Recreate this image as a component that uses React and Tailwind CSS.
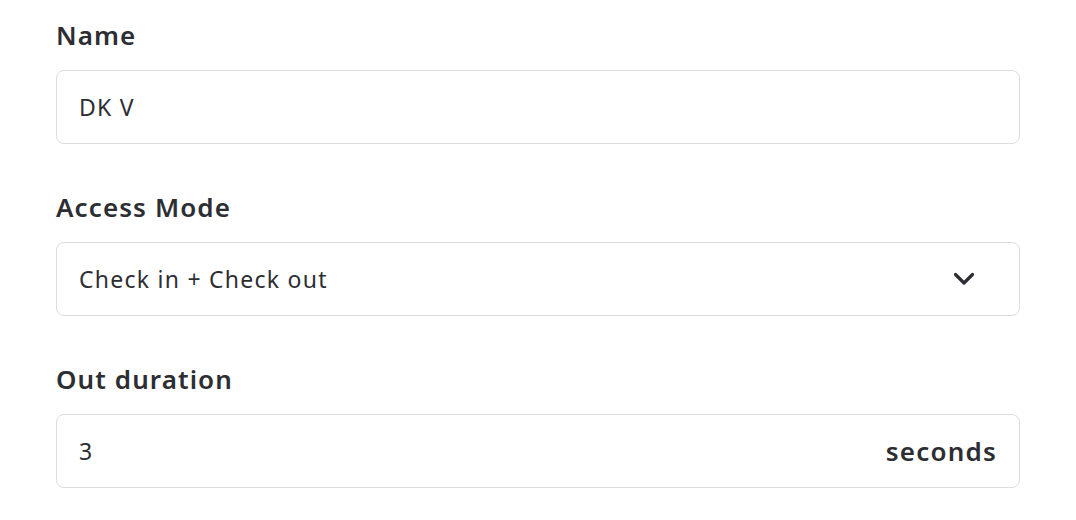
import React from "react";

const font = { fontFamily: "'Noto Sans', 'Open Sans', sans-serif" };

function Label({ children }) {
  return (
    <div className="h-[34px] flex items-center text-[26px] font-semibold tracking-[1.1px] text-[#2c2e33] leading-none">
      {children}
    </div>
  );
}

export default function App() {
  return (
    <div className="w-[1076px] h-[520px] bg-white pl-[56px] pr-[56px] pt-[18px]" style={font}>
      <div className="flex flex-col gap-[46px] w-[964px]">
        <div className="flex flex-col gap-[18px]">
          <Label>Name</Label>
          <div className="h-[74px] border border-[#dcdcdc] rounded-[8px] flex items-center px-[22px] text-[23px] tracking-[1.25px] text-[#2c2e33]">
            DK V
          </div>
        </div>
        <div className="flex flex-col gap-[18px]">
          <Label>Access Mode</Label>
          <div className="h-[74px] border border-[#dcdcdc] rounded-[8px] flex items-center justify-between pl-[22px] pr-[44px] text-[23px] tracking-[1.25px] text-[#2c2e33]">
            <span>Check in + Check out</span>
            <svg width="22" height="14" viewBox="0 0 22 14" fill="none">
              <path d="M2.5 2.5 L11 11 L19.5 2.5" stroke="#2c2e33" strokeWidth="3.2" strokeLinecap="round" strokeLinejoin="round" />
            </svg>
          </div>
        </div>
        <div className="flex flex-col gap-[18px]">
          <Label>Out duration</Label>
          <div className="h-[74px] border border-[#dcdcdc] rounded-[8px] flex items-center justify-between pl-[22px] pr-[22px] text-[23px] tracking-[1.25px] text-[#2c2e33]">
            <span>3</span>
            <span className="text-[26px] font-semibold tracking-[1.2px]">seconds</span>
          </div>
        </div>
      </div>
    </div>
  );
}
